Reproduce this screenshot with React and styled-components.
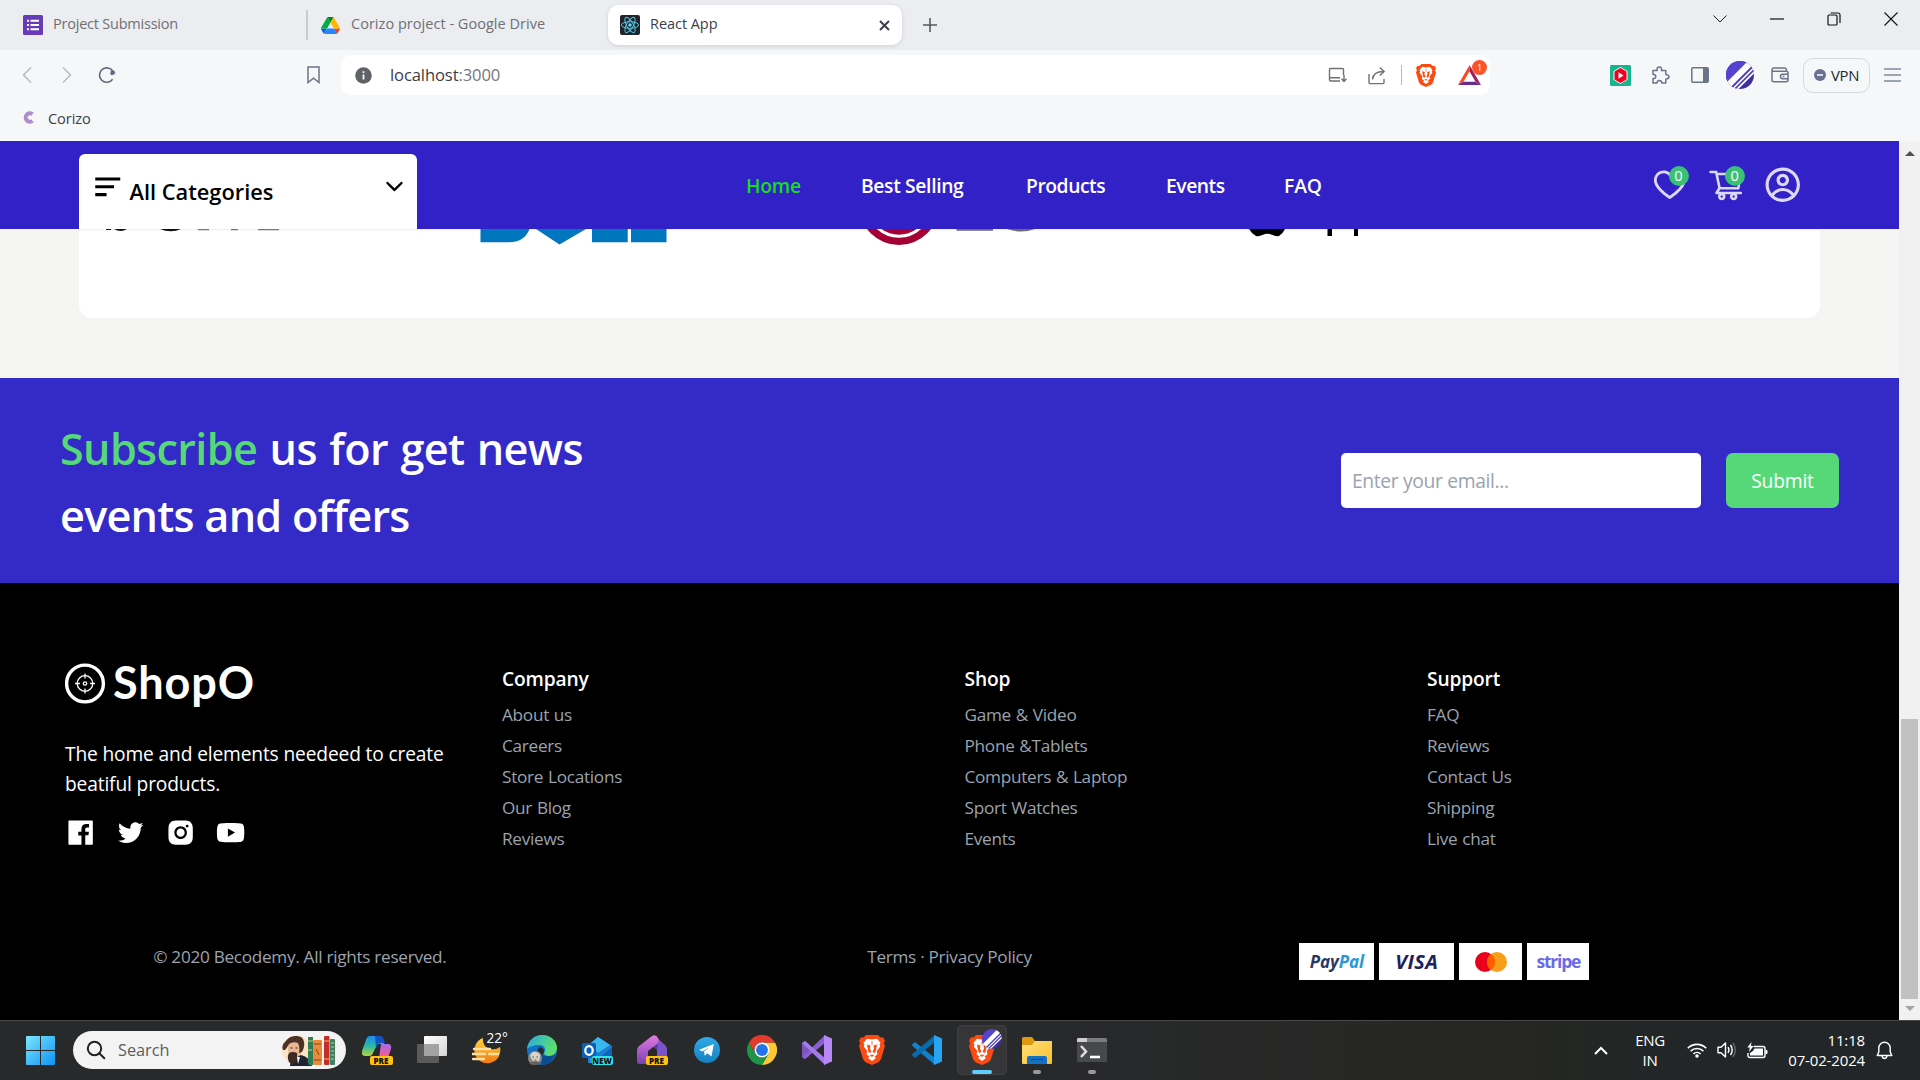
import React from 'react';
import styled, { createGlobalStyle } from 'styled-components';
import {
  AiOutlineHeart,
  AiOutlineShoppingCart,
  AiFillFacebook,
  AiOutlineTwitter,
  AiFillInstagram,
  AiFillYoutube,
} from 'react-icons/ai';
import { CgProfile } from 'react-icons/cg';
import { BiMenuAltLeft } from 'react-icons/bi';
import { IoIosArrowDown } from 'react-icons/io';

const GlobalStyle = createGlobalStyle`
  * { box-sizing: border-box; }
  html, body { margin: 0; padding: 0; background: #000; }
  body {
    width: 1920px;
    height: 1080px;
    overflow: hidden;
    font-family: "Open Sans", "Noto Sans", sans-serif;
  }
  svg { display: block; flex: none; }
  a { color: inherit; text-decoration: none; }
`;

const Screen = styled.div`
  display: flex;
  flex-direction: column;
  width: 1920px;
  height: 1080px;
  overflow: hidden;
`;

/* ---------- browser chrome ---------- */

const TabStrip = styled.div`
  display: flex;
  align-items: center;
  height: 50px;
  background: #ebedf0;
`;

const Tab = styled.div`
  display: flex;
  align-items: center;
  width: ${(p) => p.$width}px;
  height: 40px;
  padding-left: ${(p) => p.$pad}px;
  gap: ${(p) => p.$gap || 10}px;
  color: ${(p) => (p.$active ? '#3b3e4f' : '#6f7076')};
  background: ${(p) => (p.$active ? '#fff' : 'transparent')};
  border-radius: 10px;
  box-shadow: ${(p) => (p.$active ? '0 1px 4px rgba(0,0,0,.12)' : 'none')};
`;

const TabTitle = styled.span`
  padding-bottom: 2px;
  font-size: 14.5px;
  line-height: 20px;
  letter-spacing: ${(p) => p.$ls || 0}px;
  white-space: nowrap;
`;

const TabDivider = styled.div`
  width: 2px;
  height: 30px;
  background: #cbcccf;
`;

const TabClose = styled.span`
  display: flex;
  margin-left: auto;
  margin-right: 12px;
`;

const WindowControls = styled.div`
  display: flex;
  align-items: center;
  gap: 43px;
  height: 14px;
  margin: 0 22px 13px auto;
`;

const PlusSlot = styled.span`
  display: flex;
  margin-left: 21px;
`;

const Toolbar = styled.div`
  display: flex;
  align-items: center;
  height: 50px;
  background: #f6f7f9;
`;

const Slot = styled.span`
  display: flex;
  align-items: center;
  justify-content: center;
  flex: none;
  width: ${(p) => p.$w}px;
  margin-left: ${(p) => p.$ml || 0}px;
`;

const AddressBar = styled.div`
  display: flex;
  align-items: center;
  width: 1149px;
  height: 40px;
  margin-left: 21px;
  background: #fff;
  border-radius: 10px;
`;

const Address = styled.span`
  flex: 1;
  margin-left: 18px;
  padding-bottom: 2px;
  font-size: 16.6px;
  letter-spacing: -0.12px;
  color: #3b3e44;
`;

const Port = styled.span`
  color: #76777b;
`;

const BarDivider = styled.span`
  width: 1px;
  height: 20px;
  margin-left: 15px;
  background: #b6b8bd;
`;

const RewardSlot = styled.span`
  position: relative;
  display: flex;
  margin-left: 22px;
  margin-right: 9px;
`;

const RewardBadge = styled.span`
  position: absolute;
  left: 14px;
  top: -5px;
  width: 15px;
  height: 15px;
  border-radius: 50%;
  background: #fb542b;
  color: #fff;
  font-size: 9px;
  line-height: 15px;
  text-align: center;
`;

const VpnButton = styled.span`
  display: flex;
  align-items: center;
  justify-content: center;
  gap: 5px;
  width: 67px;
  height: 35px;
  margin-left: 14px;
  border: 1.5px solid #d5d8de;
  border-radius: 10px;
  color: #25272e;
  font-size: 14.9px;
  letter-spacing: -0.3px;
`;

const BookmarkBar = styled.div`
  display: flex;
  align-items: center;
  gap: 14px;
  height: 41px;
  padding: 0 0 6px 23px;
  background: #f6f7f9;
  color: #3b3e44;
  font-size: 14.6px;
  letter-spacing: -0.1px;
`;

/* ---------- page ---------- */

const Viewport = styled.div`
  display: flex;
  height: 879px;
`;

const Page = styled.div`
  width: 1899px;
  height: 879px;
  background: #f5f5f5;
`;

const Header = styled.header`
  display: flex;
  align-items: center;
  height: 88px;
  padding: 0 98px 0 79px;
  background: #3321c8;
`;

const Categories = styled.div`
  display: flex;
  align-self: flex-end;
  width: 338px;
  height: 75px;
  padding: 14px 10px 0 10px;
  background: #fff;
  border-radius: 6px 6px 0 0;
  color: #000;
`;

const CategoriesLabel = styled.span`
  flex: 1;
  margin-left: 3px;
  padding-top: 6px;
  font-size: 21.8px;
  line-height: 35px;
  letter-spacing: 0;
  font-weight: 540;
`;

const CategoriesArrow = styled.span`
  padding-top: 6px;
`;

const Nav = styled.nav`
  display: flex;
  gap: 60px;
  margin-left: 329px;
  font-size: 19.3px;
  font-weight: 630;
  color: #fff;
`;

const NavLink = styled.a`
  width: ${(p) => p.$w}px;
  white-space: nowrap;
  letter-spacing: ${(p) => p.$ls}px;
  color: ${(p) => (p.$active ? '#17dd1f' : '#fff')};
`;

const HeaderIcons = styled.div`
  display: flex;
  gap: 18.75px;
  margin-left: auto;
  color: rgba(255, 255, 255, 0.83);
`;

const IconBox = styled.span`
  position: relative;
  display: flex;
`;

const CountBadge = styled.span`
  position: absolute;
  top: 0;
  right: 0;
  width: 20px;
  height: 20px;
  border-radius: 50%;
  background: #3bc177;
  color: #fff;
  font-size: 14.6px;
  line-height: 19px;
  text-align: center;
`;

const BrandSection = styled.section`
  height: 149px;
  padding: 0 79px;
  background: #f5f5f3;
`;

const BrandCard = styled.div`
  height: 89px;
  background: #fff;
  border-radius: 0 0 13px 13px;
  box-shadow: inset 0 3px 2px -2px rgba(0, 0, 0, 0.08);
`;

const Subscribe = styled.section`
  display: flex;
  align-items: center;
  height: 205px;
  padding: 0 60px;
  background: #342ac8;
`;

const SubscribeTitle = styled.h1`
  margin: 3px 0 0;
  font-size: 43.2px;
  line-height: 67px;
  font-weight: 620;
  color: #fff;
`;

const TitleLine = styled.span`
  display: block;
  letter-spacing: ${(p) => p.$ls}px;
  word-spacing: ${(p) => p.$ws || 0}px;
`;

const Accent = styled.span`
  color: #56d879;
`;

const SubscribeForm = styled.div`
  display: flex;
  gap: 25px;
  margin-left: auto;
`;

const EmailInput = styled.input`
  width: 360px;
  height: 55px;
  padding: 0 11px;
  border: 0;
  border-radius: 5px;
  background: #fff;
  font: 19.3px "Open Sans", "Noto Sans", sans-serif;
  &::placeholder { color: #9ca3af; opacity: 1; letter-spacing: -0.35px; }
`;

const SubmitButton = styled.button`
  width: 113px;
  height: 55px;
  padding: 0;
  border: 0;
  border-radius: 7px;
  background: #56d879;
  color: #fff;
  font: 19.3px "Open Sans", "Noto Sans", sans-serif;
  letter-spacing: -0.2px;
`;

const Footer = styled.footer`
  height: 437px;
  padding-top: 78px;
  background: #000;
`;

const FooterGrid = styled.div`
  display: grid;
  grid-template-columns: 437px 462.5px 462.5px 1fr;
  height: 243px;
  padding-left: 65px;
`;

const Brand = styled.div`
  color: #fff;
`;

const Logo = styled.div`
  display: flex;
  align-items: center;
  gap: 7px;
  height: 44px;
`;

const LogoText = styled.span`
  padding-bottom: 3px;
  font-family: Lato, sans-serif;
  font-size: 45px;
  line-height: 44px;
  letter-spacing: 0.9px;
  font-weight: 700;
`;

const BrandText = styled.p`
  margin: 34px 0 18px;
  font-size: 19.2px;
  line-height: 30px;
  letter-spacing: -0.15px;
`;

const Socials = styled.div`
  display: flex;
  gap: 18.75px;
`;

const Column = styled.div`
  padding-top: 3px;
`;

const ColumnTitle = styled.h2`
  margin: 0 0 5px;
  font-size: 19.2px;
  line-height: 30px;
  letter-spacing: -0.15px;
  font-weight: 630;
  color: #fff;
`;

const ColumnLink = styled.a`
  display: block;
  font-size: 17.2px;
  line-height: 31px;
  letter-spacing: -0.28px;
  word-spacing: 0.6px;
  color: #9ca3af;
`;

const FooterBottom = styled.div`
  display: grid;
  grid-template-columns: repeat(3, 1fr);
  column-gap: 50px;
  align-items: start;
  line-height: 27px;
  font-size: 17.2px;
  letter-spacing: -0.3px;
  color: #9ca3af;
`;

const BottomText = styled.span`
  padding-top: 39px;
  text-align: center;
`;

const Payments = styled.div`
  display: flex;
  gap: 5px;
  padding-top: 39px;
`;

const PayCard = styled.span`
  display: flex;
  align-items: center;
  justify-content: center;
  width: ${(p) => p.$w}px;
  height: 37px;
  background: #fff;
  color: ${(p) => p.$color || '#222d65'};
  font-size: ${(p) => p.$size || 19}px;
  line-height: 1;
  font-weight: 700;
  font-style: ${(p) => (p.$italic ? 'italic' : 'normal')};
  letter-spacing: ${(p) => p.$ls || 0}px;
`;

const PayPalTail = styled.span`
  color: #2997d8;
`;

const Scrollbar = styled.div`
  display: flex;
  flex-direction: column;
  align-items: center;
  justify-content: space-between;
  width: 21px;
  padding: 10px 0 9px;
  background: #f1f1f1;
`;

const ScrollThumb = styled.div`
  width: 17px;
  height: 280px;
  margin: auto 0 7px;
  background: #c1c1c1;
`;

/* ---------- taskbar ---------- */

const Taskbar = styled.div`
  display: flex;
  align-items: center;
  height: 60px;
  padding: 0 27px 1px 26px;
  border-top: 1px solid #4a4a4a;
  background: linear-gradient(90deg, #28292b 0%, #28292b 55%, #262622 78%, #222628 88%, #222628 100%);
`;

const SearchBox = styled.div`
  display: flex;
  align-items: center;
  width: 273px;
  height: 38px;
  margin-left: 18px;
  padding: 0 10px 0 13px;
  border-radius: 19px;
  background: #f3f3f3;
  color: #5c5c5c;
  font-size: 16.3px;
`;

const SearchLabel = styled.span`
  flex: 1;
  margin-left: 12px;
`;

const Apps = styled.div`
  display: flex;
  align-items: center;
  margin-left: 3px;
`;

const AppSlot = styled.span`
  position: relative;
  display: flex;
  align-items: center;
  justify-content: center;
  width: 50px;
  height: 50px;
  margin: 0 2.5px;
  border-radius: 5px;
  background: ${(p) => (p.$active ? '#363638' : 'transparent')};
  box-shadow: ${(p) => (p.$active ? 'inset 0 0 0 1px #3f3f41' : 'none')};
`;

const Tag = styled.span`
  position: absolute;
  right: ${(p) => p.$right || 9}px;
  bottom: 10px;
  width: ${(p) => p.$w}px;
  height: 9px;
  border-radius: 2px;
  background: ${(p) => p.$bg};
  color: #111;
  font-size: 8px;
  line-height: 9px;
  font-weight: 800;
  text-align: center;
`;

const Degrees = styled.span`
  position: absolute;
  left: 25px;
  top: 5px;
  font-size: 13.6px;
  line-height: 16px;
  color: #fff;
`;

const Running = styled.span`
  position: absolute;
  bottom: 1px;
  width: ${(p) => (p.$wide ? 20 : 8)}px;
  height: 4px;
  border-radius: 2px;
  background: ${(p) => (p.$wide ? '#60cdff' : '#9a9a9a')};
`;

const ProfileOverlay = styled.span`
  position: absolute;
  left: 25px;
  top: 4px;
`;

const Tray = styled.div`
  display: flex;
  align-items: center;
  margin-left: auto;
  color: #fff;
  font-size: 15px;
  line-height: 20px;
`;

const Language = styled.div`
  width: 32px;
  margin-left: 26px;
  text-align: center;
  letter-spacing: -0.35px;
`;

const Clock = styled.div`
  width: 84px;
  margin: 0 11px 0 13px;
  text-align: right;
  letter-spacing: -0.15px;
`;

/* ---------- drawings ---------- */

const FormsIcon = () => (
  <svg width="20" height="20" viewBox="0 0 20 20">
    <rect width="20" height="20" rx="1.5" fill="#673ab7" />
    <path d="M7.500 5.800H16M7.500 10H16M7.500 14.200H16" stroke="#fff" strokeWidth="2" />
    <path d="M4 5.800h2M4 10h2M4 14.200h2" stroke="#fff" strokeWidth="2" />
  </svg>
);

const DriveIcon = () => (
  <svg width="19" height="17" viewBox="0 0 87.3 78">
    <path d="m6.6 66.85 3.85 6.65c.8 1.4 1.95 2.5 3.3 3.3l13.75-23.8h-27.5c0 1.55.4 3.1 1.2 4.5z" fill="#0066da" />
    <path d="m43.65 25-13.75-23.8c-1.35.8-2.5 1.9-3.3 3.3l-25.4 44a9.06 9.06 0 0 0-1.2 4.5h27.5z" fill="#00ac47" />
    <path d="m73.55 76.8c1.35-.8 2.5-1.9 3.3-3.3l1.6-2.75 7.65-13.25c.8-1.4 1.2-2.95 1.2-4.5h-27.5l5.85 11.5z" fill="#ea4335" />
    <path d="m43.65 25 13.75-23.8c-1.35-.8-2.9-1.2-4.5-1.2h-18.5c-1.6 0-3.15.45-4.5 1.2z" fill="#00832d" />
    <path d="m59.8 53h-32.3l-13.75 23.8c1.35.8 2.9 1.2 4.5 1.2h50.8c1.6 0 3.15-.45 4.5-1.2z" fill="#2684fc" />
    <path d="m73.4 26.5-12.7-22c-.8-1.4-1.95-2.5-3.3-3.3l-13.75 23.8 16.15 28h27.45c0-1.55-.4-3.1-1.2-4.5z" fill="#ffba00" />
  </svg>
);

const ReactIcon = () => (
  <svg width="20" height="20" viewBox="0 0 20 20">
    <rect width="20" height="20" rx="2" fill="#20232a" />
    <g fill="none" stroke="#53c1de" strokeWidth="1">
      <ellipse cx="10" cy="10" rx="8.6" ry="3.3" />
      <ellipse cx="10" cy="10" rx="8.6" ry="3.3" transform="rotate(60 10 10)" />
      <ellipse cx="10" cy="10" rx="8.6" ry="3.3" transform="rotate(120 10 10)" />
    </g>
    <circle cx="10" cy="10" r="1.7" fill="#61dafb" />
  </svg>
);

const Line = ({ w, h, d, color = '#6b7588', sw = 1.5 }) => (
  <svg width={w} height={h} viewBox={`0 0 ${w} ${h}`} fill="none" stroke={color} strokeWidth={sw}>
    <path d={d} />
  </svg>
);

const ReloadIcon = () => (
  <svg width="18" height="18" viewBox="0 0 18 18">
    <path d="M14.600 13.200A7.200 7.200 0 1 1 15 5.600" fill="none" stroke="#5d697c" strokeWidth="1.6" />
    <path d="M12 7.200a2.600 2.600 0 1 0 4.600-2.300L16.400 9z" fill="#5d697c" />
    <circle cx="14.600" cy="6.400" r="2.200" fill="#5d697c" />
  </svg>
);

const InfoIcon = () => (
  <svg width="17" height="17" viewBox="0 0 17 17">
    <circle cx="8.500" cy="8.500" r="8.300" fill="#5f6368" />
    <path d="M8.500 7.400v5M8.500 4.300v1.700" stroke="#fff" strokeWidth="1.700" />
  </svg>
);

const InstallIcon = () => (
  <svg width="19" height="16" viewBox="0 0 19 16" fill="none" stroke="#6e7176" strokeWidth="1.400">
    <path d="M15.500 8V2.500a1 1 0 0 0-1-1h-12a1 1 0 0 0-1 1V13a1 1 0 0 0 1 1H12M1.500 10.800H12M16 8v6M13.500 11.800l2.500 2.600 2.500-2.600" />
  </svg>
);

const ShareIcon = () => (
  <svg width="18" height="19" viewBox="0 0 18 19" fill="none" stroke="#6e7176" strokeWidth="1.400">
    <path d="M1 8v8.600a1 1 0 0 0 1 1h13a1 1 0 0 0 1-1V13M4.500 13.500c.3-4.500 3-8 11-8M11.800 1.500l4.300 4-4.300 4" />
  </svg>
);

const BatIcon = () => (
  <svg width="23" height="20" viewBox="0 0 23 20">
    <path d="M11.500 0 0 20l5.500-3.200 6-10.500z" fill="#ff4724" />
    <path d="M11.500 0v6.300l6 10.500L23 20z" fill="#9e1f63" />
    <path d="M0 20h23l-5.500-3.200h-12z" fill="#662d91" />
  </svg>
);

const PlayerExtIcon = () => (
  <svg width="21" height="21" viewBox="0 0 21 21">
    <rect width="21" height="21" rx="1.500" fill="#16b58f" />
    <path d="m10.500 2 7 4.200v8.600l-7 4.200-7-4.200V6.200z" fill="#fff" />
    <path d="m10.500 3 6 3.600v7.800l-6 3.600-6-3.600V6.600z" fill="#f3001f" />
    <path d="M8.500 7.200v6.600l5-3.300z" fill="#fff" />
  </svg>
);

const PuzzleIcon = () => (
  <svg width="19" height="19" viewBox="0 0 19 19" fill="none" stroke="#6b7588" strokeWidth="1.500">
    <path d="M2 4.500h4.300c-.8-2 .3-3.500 2-3.500s2.900 1.500 2 3.500h4.500v4c2 .3 3.200 1 3.200 2.300s-1.200 2.200-3.200 2.400V17h-4c-.1-1.700-1.200-2.500-2.500-2.500S6.200 15.300 6 17H2v-4.500c1.800.2 2.800-.7 2.800-2s-1-2.200-2.800-2z" strokeLinejoin="round" />
  </svg>
);

const SidebarIcon = () => (
  <svg width="18" height="16" viewBox="0 0 18 16">
    <rect x=".8" y=".8" width="16.400" height="14.400" rx="1" fill="none" stroke="#6b7588" strokeWidth="1.500" />
    <path d="M12 1h5v14h-5z" fill="#6b7588" />
  </svg>
);

const StripedAvatar = ({ size, id }) => (
  <svg width={size} height={size} viewBox="0 0 28 28">
    <clipPath id={id}><circle cx="14" cy="14" r="14" /></clipPath>
    <g clipPath={`url(#${id})`}>
      <rect width="28" height="28" fill="#40309f" />
      <path d="M0 0h22L0 22z" fill="#5444cf" />
      <path d="M22 0h9L0 31v-9z" fill="#fff" />
      <path d="M31 0h2.500L0 33.500V31z" fill="#4a3cc4" />
      <path d="M33.500 0H36L0 36v-2.500z" fill="#fff" />
      <path d="M36 0h2L0 38v-2z" fill="#4a3cc4" />
      <path d="M38 0h2.500L0 40.500V38z" fill="#fff" />
    </g>
  </svg>
);

const WalletIcon = () => (
  <svg width="18" height="16" viewBox="0 0 18 16" fill="none" stroke="#6b7588" strokeWidth="1.500">
    <path d="M1 3.300v9.500a2 2 0 0 0 2 2h12a2 2 0 0 0 2-2V6a1.800 1.800 0 0 0-1.800-1.800H2.200C.6 4.200.7 1 2.600 1h11.200a1.600 1.600 0 0 1 1.600 1.600v1.500M17 7.200h-5.300c-3 0-3 4.600 0 4.600H17M11.700 9.500h1.800" />
  </svg>
);

const BrandLogos = () => (
  <svg width="1300" height="20" viewBox="79 229 1300 20">
    <path d="M106 229h5v1h-5zM114 229h13q-6 4-13 0zM160 229h21q-10 4.500-21 0z" fill="#111" />
    <path d="M198 229h11v1.200h-11zM231 229h7v1.200h-7zM258 229h21v1.200h-21z" fill="#777" />
    <path d="M480.500 229h49q-5 13.300-21 13.300h-28zM536 229h50l-26.500 15.500zM592 229h35.700v13.300H592zM631 229h35.500v13.300H631z" fill="#0076be" />
    <circle cx="899" cy="205" r="40" fill="#a50034" />
    <circle cx="899" cy="205" r="31.200" fill="none" stroke="#fff" strokeWidth="3" />
    <path d="M956.500 229H993v1.800h-36.500zM1007 229h28q-14 5-28 0z" fill="#6b6b6b" />
    <path d="M1249 229h36q-2 4.500-6 7-3.500.8-7-1.200-5-2-9 0-4 2-7 1.200-4.500-2.500-7-7z" fill="#000" />
    <path d="M1327.500 229h4.500v7h-4.500zM1354 229h4v7h-4z" fill="#000" />
  </svg>
);

const LogoMark = () => (
  <svg width="41" height="41" viewBox="0 0 41 41" fill="none" stroke="#fff">
    <circle cx="20" cy="20.500" r="18.400" strokeWidth="3.400" />
    <circle cx="20" cy="20.500" r="7.800" strokeWidth="1.300" />
    <circle cx="20" cy="20.500" r="1.700" strokeWidth="1.300" />
    <path d="M20 10.500v5M20 25.500v5M10 20.500h5M25 20.500h5" strokeWidth="1.300" />
  </svg>
);

const MastercardIcon = () => (
  <svg width="34" height="22" viewBox="0 0 34 22">
    <circle cx="11" cy="11" r="10" fill="#eb001b" />
    <circle cx="23" cy="11" r="10" fill="#f79e1b" />
    <path d="M17 3a10 10 0 0 1 0 16 10 10 0 0 1 0-16z" fill="#ff5f00" />
  </svg>
);

const WindowsIcon = () => (
  <svg width="29" height="29" viewBox="0 0 29 29">
    <linearGradient id="win" x1="0" y1="0" x2="1" y2="1">
      <stop offset="0" stopColor="#7be6fd" />
      <stop offset="1" stopColor="#0f93f5" />
    </linearGradient>
    <path d="M1 0h13v14H0V1q0-1 1-1zM15 0h13q1 0 1 1v13H15zM0 15h14v14H1q-1 0-1-1zM15 15h14v13q0 1-1 1H15z" fill="url(#win)" />
  </svg>
);

const SearchGlyph = () => (
  <svg width="20" height="20" viewBox="0 0 20 20" fill="none" stroke="#222" strokeWidth="2">
    <circle cx="8.500" cy="8.500" r="6.700" />
    <path d="m13.300 13.300 5 5" strokeLinecap="round" />
  </svg>
);

const WriterArt = () => (
  <svg width="54" height="31" viewBox="0 0 54 31">
    <circle cx="14.500" cy="15" r="14.500" fill="#fbe3c4" />
    <path d="M8 31q0-6 5-9l6-2q9 2 11 11z" fill="#1f2430" />
    <path d="M6 8q5-5 11-3 4 3 3 9-1 8-7 9-7-1-7-8z" fill="#e9b892" />
    <path d="M1 15q-2-5 2-8 4-6 10-6 8-1 9 6 1 5-2 10l-3 1q1-6-1-10-5-2-9 1-2 4-4 6z" fill="#4b3226" />
    <path d="M7 18q4-2 8 0 1 7-3 11-5 1-6-5-.500-4 1-6z" fill="#3d2a22" />
    <path d="m15 22 3 0-2 7z" fill="#fff" />
    <path d="M8.500 13h2M13.500 13h2" stroke="#3b271d" />
    <path d="M26 2h5v28h-4q-2-3-1-8z" fill="#2f7d57" />
    <path d="M26 6h5M26 15h4" stroke="#d8c47a" />
    <rect x="31" y="5" width="9" height="25" rx="1" fill="#ec8a3b" />
    <path d="M32 9h7M32 25h7M34 14l3 6" stroke="#8a4518" />
    <rect x="42" y="1" width="5.500" height="29" rx="1" fill="#c22f2b" />
    <path d="M42 6h5M42 24h5" stroke="#f0b75f" />
    <rect x="48" y="4" width="5" height="26" rx="1" fill="#3f8062" />
    <path d="M49 8h3M49 12h3M49 16h3M49 20h3M49 24h3" stroke="#dfc27a" />
  </svg>
);

const CopilotIcon = () => (
  <svg width="30" height="30" viewBox="0 0 30 30">
    <linearGradient id="cpa" x1="0" y1="0" x2="0" y2="1">
      <stop offset="0" stopColor="#1c8cf0" />
      <stop offset=".5" stopColor="#28b9a4" />
      <stop offset="1" stopColor="#b9d33a" />
    </linearGradient>
    <linearGradient id="cpb" x1="0" y1="0" x2="0" y2="1">
      <stop offset="0" stopColor="#a46bf0" />
      <stop offset=".6" stopColor="#ee5c9a" />
      <stop offset="1" stopColor="#ff9a56" />
    </linearGradient>
    <path d="M8 1h9q3 0 4 4l1 4h-4q-3 0-4 3l-3 6q-1 3-4 3H3q-4 0-3-5l4-11q1-4 4-4z" fill="url(#cpa)" />
    <path d="M13 1h5q3 0 4 4l1 3h-4q-3 0-4 3l-1 2z" fill="#1552c4" />
    <path d="M19 9h7q4 0 3 5l-3 9q-1 4-4 4h-9q3 0 4-4z" fill="url(#cpb)" />
  </svg>
);

const TaskViewIcon = () => (
  <svg width="30" height="30" viewBox="0 0 30 30">
    <linearGradient id="tv" x1="0" y1="0" x2="1" y2="1">
      <stop offset="0" stopColor="#fff" />
      <stop offset="1" stopColor="#d5d5d5" />
    </linearGradient>
    <rect x="0" y="9" width="22" height="19" rx="1" fill="#5b5b5b" />
    <rect x="7" y="1" width="23" height="20" rx="1" fill="url(#tv)" />
    <path d="M7 9h15v12H7z" fill="#a3a3a3" />
  </svg>
);

const WeatherIcon = () => (
  <svg width="30" height="30" viewBox="0 0 30 30">
    <linearGradient id="sun" x1="0" y1="0" x2="0" y2="1">
      <stop offset="0" stopColor="#ffd23e" />
      <stop offset="1" stopColor="#f27a12" />
    </linearGradient>
    <path d="M11 3q-1 9 8 11 5 1 9-2a13 13 0 1 1-17-9z" fill="url(#sun)" />
    <path d="M2 14h16M0 19h13M17 19h9M1 24h11" stroke="#ffe2a3" strokeWidth="2.400" strokeLinecap="round" />
  </svg>
);

const EdgeIcon = () => (
  <svg width="30" height="30" viewBox="0 0 30 30">
    <linearGradient id="eda" x1="0" y1="0" x2="1" y2=".4">
      <stop offset="0" stopColor="#2aa7e8" />
      <stop offset="1" stopColor="#5be06b" />
    </linearGradient>
    <circle cx="15" cy="15" r="15" fill="#1370c6" />
    <path d="M0 14C1 5 8 0 15 0c9 0 15 6 15 13 0 5-4 8-8 8-3 0-5-1-5-3 2-2 2-8-5-8-5 0-10 2-12 4z" fill="url(#eda)" />
    <path d="M16 14q2 3-1 5 3 3 8 2 4 0 6-2-4 10-14 11-6-8 1-16z" fill="#0c4d92" />
    <path d="M13 12q4 1 4 5l-2 3-5-5z" fill="#28292b" />
    <circle cx="8" cy="23" r="7" fill="#8a8782" />
    <path d="M3 21q2-5 6-4 5 1 4 5l-1 4H6z" fill="#d9d4cb" />
    <path d="M2 28q6-3 12 0l-3 2H5z" fill="#66615b" />
    <path d="M5.500 22H7M9.500 22H11M7.500 25h2" stroke="#4b443d" />
  </svg>
);

const OutlookIcon = () => (
  <svg width="30" height="30" viewBox="0 0 30 30">
    <path d="M16 2 30 11v17H6V10z" fill="#1a7fd4" />
    <path d="M16 2 28 10l-12 8-8-9z" fill="#39b7ee" />
    <path d="M30 12v16H12z" fill="#1263b5" />
    <path d="m8 18 22 10H8z" fill="#2a9be6" />
    <rect x="0" y="8" width="14" height="15" rx="1.500" fill="#0a62b8" />
    <ellipse cx="7" cy="15.500" rx="3.700" ry="4.400" fill="none" stroke="#fff" strokeWidth="2.200" />
  </svg>
);

const HomeAppIcon = () => (
  <svg width="30" height="30" viewBox="0 0 30 30">
    <linearGradient id="hm" x1="0" y1="0" x2="0" y2="1">
      <stop offset="0" stopColor="#e07be0" />
      <stop offset="1" stopColor="#7a3fb5" />
    </linearGradient>
    <path d="M18 1 28 10q2 2 2 4v13q0 2-2 2h-8V15l-5-5z" fill="#7a55c8" />
    <path d="M18 1 21 9l-1 6-5-5z" fill="#55379c" />
    <path d="M15 1q4-2 6 2t-2 7l-8 6v13H2q-2 0-2-2V15q0-2 2-4z" fill="url(#hm)" />
  </svg>
);

const TelegramIcon = () => (
  <svg width="26" height="26" viewBox="0 0 26 26">
    <linearGradient id="tg" x1="0" y1="0" x2="0" y2="1">
      <stop offset="0" stopColor="#2fa9e6" />
      <stop offset="1" stopColor="#1580c0" />
    </linearGradient>
    <circle cx="13" cy="13" r="13" fill="url(#tg)" />
    <path d="M5 12.800 19.800 7l-2.300 12.500-4.300-3.200-2.400 2.400-.8-4.300 6-4.700-7.600 4.700z" fill="#fff" />
  </svg>
);

const ChromeIcon = () => (
  <svg width="30" height="30" viewBox="0 0 48 48">
    <path d="M24 12h20.800A24 24 0 0 1 24 48l10.400-18z" fill="#fcc934" />
    <path d="M3.200 12 13.600 30A12 12 0 0 0 34.400 30L24 48A24 24 0 0 1 3.200 12z" fill="#1e9447" />
    <path d="M3.200 12A24 24 0 0 1 44.800 12H24a12 12 0 0 0-10.400 18z" fill="#e33b2e" />
    <circle cx="24" cy="24" r="12" fill="#fff" />
    <circle cx="24" cy="24" r="9.500" fill="#2374e8" />
  </svg>
);

const VisualStudioIcon = () => (
  <svg width="30" height="30" viewBox="0 0 30 30">
    <path d="M0 8 3 6l4 3v12l-4 3-3-2z" fill="#7e55bf" />
    <path d="M5 17.500 0 22l3 2L23 8V0z" fill="#8a5fd0" />
    <path d="M3 6 0 8l23 22v-7z" fill="#a27be4" />
    <path d="m22 0 8 3.500v23L22 30z" fill="#b787f5" />
  </svg>
);

const VsCodeIcon = () => (
  <svg width="30" height="30" viewBox="0 0 30 30">
    <path d="M0 9.500 3 7l20 16v7L1 11.500q-1-1-1-2z" fill="#1181cc" />
    <path d="M0 20.500 3 23 23 7V0L1 18.500q-1 1-1 2z" fill="#0b6cad" />
    <path d="m22 0 8 3.500v23L22 30z" fill="#27a5f2" />
  </svg>
);

const FilesIcon = () => (
  <svg width="30" height="27" viewBox="0 0 30 27">
    <path d="M0 1.500Q0 0 1.500 0H10l3 4v5H0z" fill="#dd9a10" />
    <linearGradient id="fl" x1="0" y1="0" x2="1" y2="1">
      <stop offset="0" stopColor="#ffe07a" />
      <stop offset="1" stopColor="#fbbf2e" />
    </linearGradient>
    <path d="M0 8h10l3-4h17v22q0 1-1 1H1q-1 0-1-1z" fill="url(#fl)" />
    <path d="M5 27v-6q0-2 2-2h16q2 0 2 2v6z" fill="#1472c4" />
    <path d="M9 22.500h12" stroke="#0a4b86" strokeWidth="1.200" />
  </svg>
);

const TerminalIcon = () => (
  <svg width="30" height="24" viewBox="0 0 30 24">
    <rect width="30" height="24" rx="1.500" fill="#46484b" />
    <path d="M1.500 0h27Q30 0 30 1.500V4H0V1.500Q0 0 1.500 0z" fill="#7b7c7e" />
    <path d="M0 4V1.500Q0 0 1.500 0H10v4z" fill="#cfcfcf" />
    <path d="m4 8 5 5.500L4 19" fill="none" stroke="#ddd" strokeWidth="2.600" />
    <path d="M13 19h10" stroke="#fff" strokeWidth="2.600" />
  </svg>
);

const LionShield = ({ w, h }) => (
  <svg width={w} height={h} viewBox="0 0 26 30" preserveAspectRatio="none">
    <path d="M7 0h12l2.500 2.500 2.500-.3 2 3.500-1.200 2.500L26 11l-4 13q-1 2-3 3.500L13 30l-6-2.500q-2-1.500-3-3.500L0 11l1.200-2.800L0 5.700l2-3.500 2.500.3z" fill="#fb4a12" />
    <path
      d="m13 4.500 5-.8 3.500 4-1 2 .8 1.800-3.600 4.500.8 3.300-3 2.200L17 23l-4 3-4-3 1.500-1.500-3-2.200.8-3.300-3.600-4.500.8-1.800-1-2L8 3.700z"
      fill="#fff"
    />
    <path d="m8 9.500 3.500 1-.5 3 1.500 3.500L10 18l-1-3zM18 9.500l-3.500 1 .5 3-1.500 3.500L16 18l1-3zM10.500 19.800h5L13 22z" fill="#fb4a12" />
    <path d="M13 6v4" stroke="#fb4a12" strokeWidth=".8" />
  </svg>
);

const WifiIcon = () => (
  <svg width="20" height="16" viewBox="0 0 20 16" fill="none" stroke="#fff" strokeWidth="1.600">
    <path d="M.8 6.200a13 13 0 0 1 18.400 0M3.600 9.100a9.200 9.200 0 0 1 12.800 0M6.400 11.900a5.200 5.200 0 0 1 7.200 0" />
    <circle cx="10" cy="14" r="1" fill="#fff" />
  </svg>
);

const VolumeIcon = () => (
  <svg width="20" height="18" viewBox="0 0 20 18" fill="none" stroke="#fff" strokeWidth="1.400">
    <path d="M1 6.200h3L8.500 2v14L4 11.800H1z" strokeLinejoin="round" />
    <path d="M11 6.200q2 2.800 0 5.600M13.500 4q3.400 5 0 10" />
    <path d="M16 2q4.600 7 0 14" stroke="#666" />
  </svg>
);

const BatteryIcon = () => (
  <svg width="21" height="17" viewBox="0 0 21 17">
    <path d="M6.500 4.500H16q2 0 2 2v7q0 2-2 2H3q-2 0-2-2V11" fill="none" stroke="#fff" strokeWidth="1.400" />
    <path d="M7.500 6.500H16v7H3V11l3-2z" fill="#fff" />
    <path d="M18.500 8h1.200q.8 0 .8 1v2q0 1-.8 1h-1.200zM4.500 0 .3 5.500h2.500L2 10l4.500-6H4z" fill="#fff" />
  </svg>
);

const BellIcon = () => (
  <svg width="17" height="19" viewBox="0 0 17 19" fill="none" stroke="#fff" strokeWidth="1.400">
    <path d="M1.200 14.500 2.800 11V7a5.700 5.700 0 0 1 11.400 0v4l1.600 3.500zM6 15q.5 2.500 2.500 2.500T11 15" strokeLinejoin="round" />
  </svg>
);

/* ---------- data ---------- */

const navItems = [
  { label: 'Home', w: 55, ls: -0.2, active: true },
  { label: 'Best Selling', w: 105, ls: -0.35 },
  { label: 'Products', w: 80, ls: -0.45 },
  { label: 'Events', w: 58, ls: -0.45 },
  { label: 'FAQ', w: 39, ls: -0.1 },
];

const footerColumns = [
  { title: 'Company', links: ['About us', 'Careers', 'Store Locations', 'Our Blog', 'Reviews'] },
  { title: 'Shop', links: ['Game & Video', 'Phone &Tablets', 'Computers & Laptop', 'Sport Watches', 'Events'] },
  { title: 'Support', links: ['FAQ', 'Reviews', 'Contact Us', 'Shipping', 'Live chat'] },
];

function BrowserChrome() {
  return (
    <>
      <TabStrip>
        <Tab $width={306} $pad={23}><FormsIcon /><TabTitle $ls={-0.22}>Project Submission</TabTitle></Tab>
        <TabDivider />
        <Tab $width={300} $pad={13} $gap={11}><DriveIcon /><TabTitle $ls={0.03}>Corizo project - Google Drive</TabTitle></Tab>
        <Tab $width={294} $pad={12} $active>
          <ReactIcon /><TabTitle $ls={-0.05}>React App</TabTitle>
          <TabClose><Line w={11} h={11} d="M1 1l9 9M10 1l-9 9" color="#3b3e4f" sw={2} /></TabClose>
        </Tab>
        <PlusSlot><Line w={14} h={14} d="M7 0v14M0 7h14" color="#55575c" sw={1.6} /></PlusSlot>
        <WindowControls>
          <Line w={14} h={8} d="M.5.500 7 7l6.500-6.500" color="#222" sw={1} />
          <Line w={14} h={2} d="M0 1h14" color="#111" sw={1.2} />
          <Line w={14} h={14} d="M1 4q0-1 1-1h7q1 0 1 1v8q0 1-1 1H2q-1 0-1-1zM3.500 1H11q2 0 2 2v8" color="#111" sw={1.2} />
          <Line w={14} h={14} d="M.5.500l13 13M13.500.500l-13 13" color="#111" sw={1.1} />
        </WindowControls>
      </TabStrip>
      <Toolbar>
        <Slot $w={10} $ml={22}><Line w={10} h={16} d="M9 .500 1.500 8 9 15.500" color="#b5bac4" /></Slot>
        <Slot $w={10} $ml={30}><Line w={10} h={16} d="M1 .500 8.500 8 1 15.500" color="#b5bac4" /></Slot>
        <Slot $w={18} $ml={26}><ReloadIcon /></Slot>
        <Slot $w={13} $ml={191}><Line w={13} h={18} d="M1 1h11v15.500l-5.500-4.300L1 16.500z" /></Slot>
        <AddressBar>
          <Slot $w={17} $ml={14}><InfoIcon /></Slot>
          <Address>localhost<Port>:3000</Port></Address>
          <Slot $w={19}><InstallIcon /></Slot>
          <Slot $w={18} $ml={21}><ShareIcon /></Slot>
          <BarDivider />
          <Slot $w={20} $ml={14}><LionShield w={20} h={23} /></Slot>
          <RewardSlot><BatIcon /><RewardBadge>1</RewardBadge></RewardSlot>
        </AddressBar>
        <Slot $w={21} $ml={120}><PlayerExtIcon /></Slot>
        <Slot $w={19} $ml={20}><PuzzleIcon /></Slot>
        <Slot $w={18} $ml={21}><SidebarIcon /></Slot>
        <Slot $w={28} $ml={17}><StripedAvatar size={28} id="avatarTop" /></Slot>
        <Slot $w={18} $ml={17}><WalletIcon /></Slot>
        <VpnButton>
          <svg width="12" height="12" viewBox="0 0 12 12">
            <circle cx="6" cy="6" r="6" fill="#6b7093" />
            <path d="M3 6h6" stroke="#fff" strokeWidth="1.500" />
          </svg>
          VPN
        </VpnButton>
        <Slot $w={17} $ml={14}><Line w={17} h={14} d="M0 1h17M0 7h17M0 13h17" color="#7f8a9c" /></Slot>
      </Toolbar>
      <BookmarkBar>
        <svg width="11" height="13" viewBox="0 0 11 13">
          <path d="M9.500 3.200A4.200 4.200 0 1 0 9.500 9.800" fill="none" stroke="#b08ccf" strokeWidth="4" />
        </svg>
        Corizo
      </BookmarkBar>
    </>
  );
}

function ShopPage() {
  return (
    <Viewport>
      <Page>
        <Header>
          <Categories>
            <BiMenuAltLeft size={37.5} />
            <CategoriesLabel>All Categories</CategoriesLabel>
            <CategoriesArrow><IoIosArrowDown size={25} /></CategoriesArrow>
          </Categories>
          <Nav>
            {navItems.map((n) => (
              <NavLink key={n.label} $w={n.w} $ls={n.ls} $active={n.active}>{n.label}</NavLink>
            ))}
          </Nav>
          <HeaderIcons>
            <IconBox><AiOutlineHeart size={37.5} /><CountBadge>0</CountBadge></IconBox>
            <IconBox><AiOutlineShoppingCart size={37.5} /><CountBadge>0</CountBadge></IconBox>
            <IconBox><CgProfile size={37.5} /></IconBox>
          </HeaderIcons>
        </Header>
        <BrandSection>
          <BrandCard><BrandLogos /></BrandCard>
        </BrandSection>
        <Subscribe>
          <SubscribeTitle>
            <TitleLine $ls={-0.65} $ws={1.9}><Accent>Subscribe</Accent> us for get news</TitleLine>
            <TitleLine $ls={-0.75}>events and offers</TitleLine>
          </SubscribeTitle>
          <SubscribeForm>
            <EmailInput placeholder="Enter your email..." />
            <SubmitButton>Submit</SubmitButton>
          </SubscribeForm>
        </Subscribe>
        <Footer>
          <FooterGrid>
            <Brand>
              <Logo><LogoMark /><LogoText>ShopO</LogoText></Logo>
              <BrandText>The home and elements needeed to create<br />beatiful products.</BrandText>
              <Socials>
                <AiFillFacebook size={31.25} />
                <AiOutlineTwitter size={31.25} />
                <AiFillInstagram size={31.25} />
                <AiFillYoutube size={31.25} />
              </Socials>
            </Brand>
            {footerColumns.map((c) => (
              <Column key={c.title}>
                <ColumnTitle>{c.title}</ColumnTitle>
                {c.links.map((l) => <ColumnLink key={l}>{l}</ColumnLink>)}
              </Column>
            ))}
          </FooterGrid>
          <FooterBottom>
            <BottomText>© 2020 Becodemy. All rights reserved.</BottomText>
            <BottomText>Terms · Privacy Policy</BottomText>
            <Payments>
              <PayCard $w={75} $italic $size={17} $color="#2b3764" $ls={-0.1}>Pay<PayPalTail>Pal</PayPalTail></PayCard>
              <PayCard $w={75} $italic $size={20} $color="#211f5e" $ls={0.4}>VISA</PayCard>
              <PayCard $w={63}><MastercardIcon /></PayCard>
              <PayCard $w={62} $size={17.5} $color="#6c6ae6" $ls={-1.2}>stripe</PayCard>
            </Payments>
          </FooterBottom>
        </Footer>
      </Page>
      <Scrollbar>
        <svg width="10" height="5" viewBox="0 0 10 5"><path d="M0 5 5 0l5 5z" fill="#505050" /></svg>
        <ScrollThumb />
        <svg width="10" height="5" viewBox="0 0 10 5"><path d="m0 0 5 5 5-5z" fill="#a3a3a3" /></svg>
      </Scrollbar>
    </Viewport>
  );
}

function WindowsTaskbar() {
  return (
    <Taskbar>
      <WindowsIcon />
      <SearchBox>
        <SearchGlyph />
        <SearchLabel>Search</SearchLabel>
        <WriterArt />
      </SearchBox>
      <Apps>
        <AppSlot><CopilotIcon /><Tag $w={23} $bg="#ffc20e">PRE</Tag></AppSlot>
        <AppSlot><TaskViewIcon /></AppSlot>
        <AppSlot><WeatherIcon /><Degrees>22°</Degrees></AppSlot>
        <AppSlot><EdgeIcon /></AppSlot>
        <AppSlot><OutlookIcon /><Tag $w={21} $bg="#2fe3e8">NEW</Tag></AppSlot>
        <AppSlot><HomeAppIcon /><Tag $w={22} $bg="#ffc20e">PRE</Tag></AppSlot>
        <AppSlot><TelegramIcon /></AppSlot>
        <AppSlot><ChromeIcon /></AppSlot>
        <AppSlot><VisualStudioIcon /></AppSlot>
        <AppSlot><LionShield w={26} h={30} /></AppSlot>
        <AppSlot><VsCodeIcon /></AppSlot>
        <AppSlot $active>
          <LionShield w={26} h={30} />
          <ProfileOverlay><StripedAvatar size={20} id="avatarTask" /></ProfileOverlay>
          <Running $wide />
        </AppSlot>
        <AppSlot><FilesIcon /><Running /></AppSlot>
        <AppSlot><TerminalIcon /><Running /></AppSlot>
      </Apps>
      <Tray>
        <Line w={14} h={9} d="M1 8l6-6 6 6" color="#fff" sw={2} />
        <Language>ENG<br />IN</Language>
        <Slot $w={20} $ml={21}><WifiIcon /></Slot>
        <Slot $w={20} $ml={10}><VolumeIcon /></Slot>
        <Slot $w={21} $ml={10}><BatteryIcon /></Slot>
        <Clock>11:18<br />07-02-2024</Clock>
        <BellIcon />
      </Tray>
    </Taskbar>
  );
}

export default function App() {
  return (
    <Screen>
      <GlobalStyle />
      <BrowserChrome />
      <ShopPage />
      <WindowsTaskbar />
    </Screen>
  );
}
